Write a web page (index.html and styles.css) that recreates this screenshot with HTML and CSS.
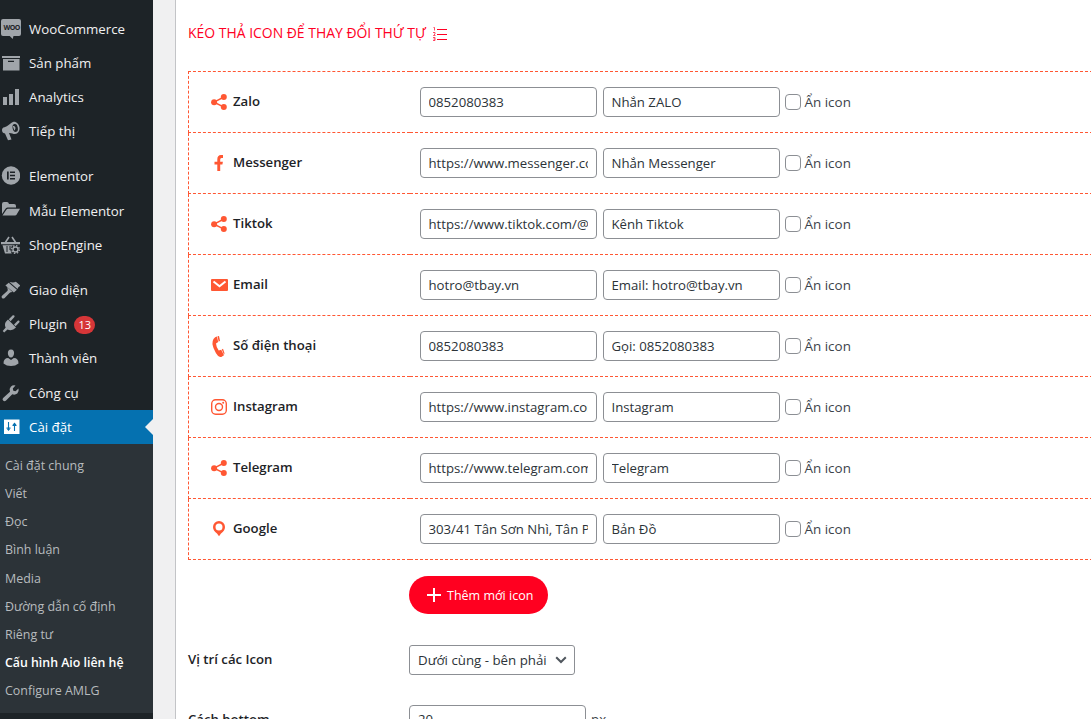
FILE: index.html
```
<!DOCTYPE html>
<html lang="vi">
<head>
<meta charset="utf-8">
<title>Cấu hình Aio liên hệ</title>
<link rel="stylesheet" href="styles.css">
</head>
<body>
<svg class="defs" width="0" height="0" aria-hidden="true">
  <symbol id="share" viewBox="0 0 17 16"><path d="M13 3L3 8.2l10 5" fill="none" stroke="currentColor" stroke-width="1.5"/><circle cx="3.1" cy="8.2" r="3"/><circle cx="12.8" cy="3.1" r="3"/><circle cx="12.8" cy="13" r="3"/></symbol>
</svg>
<div class="admin">
  <aside class="sidebar">
    <nav class="menu">
      <div class="group">
        <a class="item"><svg class="ico woo-icon" viewBox="0 0 21 20"><path d="M3 0h16q2 0 2 2v13q0 2-2 2h-5.500l-.8 3-3-3H3q-2 0-2-2V2q0-2 2-2z"/><text class="woo" x="3.500" y="11">WOO</text></svg>WooCommerce</a>
        <a class="item"><svg class="ico" viewBox="0 0 20 20"><path d="M2 3h18v2H2zM3 6h16.500v11.500H3zm5 1.800v1.200h6V7.800z" fill-rule="evenodd"/></svg>Sản phẩm</a>
        <a class="item"><svg class="ico" viewBox="0 0 20 20"><path d="M3 10h4v8H3zM9 7h4v11H9zM15 2h4v16h-4z"/></svg>Analytics</a>
        <a class="item"><svg class="ico" viewBox="0 0 20 20"><path d="M13 1c3-.8 6 2 6.500 5.500.4 3.500-1.500 6.500-4.500 6.500-1.500.2-3.500-1.200-6-1l2.500 6.500-3.500.8-3-6.800C2.500 12 2 10.500 2 9s.8-2.500 2.500-2.800C8 5.500 10 2 13 1z"/><ellipse cx="15.200" cy="7" rx="2.600" ry="4" fill="#1d2327" transform="rotate(-12 15 7)"/><path d="M12.800 5c2.600-.5 3.600 2.500 1.500 4.500z"/></svg>Tiếp thị</a>
      </div>
      <div class="group">
        <a class="item"><svg class="ico" viewBox="0 0 20 20"><circle cx="11" cy="9.500" r="9.200"/><path d="M7 5.500h1.700v8H7zM10 5.500h5v1.600h-5zM10 8.700h5v1.600h-5zM10 11.900h5v1.600h-5z" fill="#1d2327"/></svg>Elementor</a>
        <a class="item"><svg class="ico" viewBox="0 0 20 20"><path d="M2 13V3q0-2 2-2h3q1.500 0 2 2h5q2 0 2 2v1.500H7.500q-1.500 0-2.500 2zM2.500 14.500l4-6q.5-.8 1.500-.8h12l-3.500 6q-.5.8-1.500.8z"/></svg>Mẫu Elementor</a>
        <a class="item"><svg class="ico" viewBox="0 0 20 20"><path d="M1 7h19v2.200H1zM2.500 10.300h15l-.3 2h-3l-3.500 3 1 3.200H5z"/><path d="M5 8l4-6M12 2l4 6" fill="none" stroke="currentColor" stroke-width="1.600"/><path d="M7 11v6M10 11v4" stroke="#1d2327" stroke-width="1"/><circle cx="15.500" cy="14.500" r="5" fill="#1d2327"/><circle cx="15.500" cy="14.500" r="3.800" fill="none" stroke="currentColor" stroke-width="1.500" stroke-dasharray="1.500 1.485"/><circle cx="15.500" cy="14.500" r="2.500" fill="none" stroke="currentColor" stroke-width="1.400"/></svg>ShopEngine</a>
      </div>
      <div class="group">
        <a class="item"><svg class="ico" viewBox="0 0 20 20"><path d="M9.500 2q4 1 6.300-.2l1 .8 3.700 3.200q-2.500 1-3 3.200zM8.700 2.800l8.200 7-3 2.700-8.500-7zM7 7l5.500 4.900q-2.200 0-3 1l-4.800 5q-1.500 1.200-2.700 0-1-1.300.3-2.500l5-4.500q1-1-.3-3.900z"/></svg>Giao diện</a>
        <a class="item"><svg class="ico" viewBox="0 0 20 20"><path d="M8 5.500l8 8q-4 4-8.500 2L4.200 18.500l-1.500-1.500 3-3.500Q3.500 9.500 8 5.500zM8.800 5.300l4-4q1.200-.5 1.700.5.400.8-.3 1.400l-3.600 4zM14 10.500l4-4q1.300-.4 1.500.8.200.8-.3 1.300l-3.600 3.600z"/></svg>Plugin<span class="badge">13</span></a>
        <a class="item"><svg class="ico" viewBox="0 0 20 20"><path d="M11 1.500c4.800 0 3.400 8 0 8s-4.800-8 0-8zM3.500 15.500q0-5.500 4.700-5.500L11 12l2.800-2q4.700 0 4.700 5.500-3 2.500-7.500 2.500t-7.500-2.500z"/></svg>Thành viên</a>
        <a class="item"><svg class="ico" viewBox="0 0 20 20"><path d="M15.500 2.500l-2.700 3 .5 2.200 2.200.5 3-2.700q.8 3-1.200 5-2.300 1.800-5 .8l-6.500 6.500q-1.500 1-2.700-.2-1.200-1.400 0-2.700L10 8.700q-1.200-2.900.8-5 2-2 4.700-1.200z"/></svg>Công cụ</a>
        <a class="item active"><svg class="ico" viewBox="0 0 20 20"><path d="M4 2.500h15.500v14.500H4z"/><path d="M8.500 5v8M6.500 11h4M14.500 6v8M12.500 8.500h4" stroke="#0571b0" stroke-width="1.100"/><path d="M6.500 11.500h4l-2 2.500zM12.500 8h4l-2-2.500z" fill="#0571b0"/></svg>Cài đặt</a>
      </div>
    </nav>
    <nav class="submenu">
      <a>Cài đặt chung</a><a>Viết</a><a>Đọc</a><a>Bình luận</a><a>Media</a><a>Đường dẫn cố định</a><a>Riêng tư</a><a class="current">Cấu hình Aio liên hệ</a><a>Configure AMLG</a>
    </nav>
  </aside>
  <main class="panel">
    <h2 class="title">KÉO THẢ ICON ĐỂ THAY ĐỔI THỨ TỰ
      <svg class="list-icon" width="14" height="15" viewBox="0 0 14 15"><path d="M4 3.500h10M4 8.500h10M4 13.500h10" stroke="currentColor"/><path d="M.5 1.500h1v3M0 6.500h2v1.500L.5 9.500H2.500M0 11.500h2v3H0M.5 13h1.500" fill="none" stroke="currentColor" stroke-width=".7"/></svg>
    </h2>
    <table class="contacts">
      <tr><th><div class="name"><svg class="net" viewBox="0 0 17 16"><use href="#share"/></svg><span>Zalo</span></div></th><td><div class="fields"><input value="0852080383"><input value="Nhắn ZALO"><label><input type="checkbox">Ẩn icon</label></div></td></tr>
      <tr><th><div class="name"><svg class="net" viewBox="0 0 17 16"><path d="M6.300 16V9.500H3.500V6.800h2.800V4.500Q6.300 0 10 0h2v3h-1.500Q9.200 3 9.200 4.500v2.300h2.700l-.5 2.700H9.200V16z"/></svg><span>Messenger</span></div></th><td><div class="fields"><input value="https://www.messenger.com/t/tbay"><input value="Nhắn Messenger"><label><input type="checkbox">Ẩn icon</label></div></td></tr>
      <tr><th><div class="name"><svg class="net" viewBox="0 0 17 16"><use href="#share"/></svg><span>Tiktok</span></div></th><td><div class="fields"><input value="https://www.tiktok.com/@tbay"><input value="Kênh Tiktok"><label><input type="checkbox">Ẩn icon</label></div></td></tr>
      <tr><th><div class="name"><svg class="net" viewBox="0 0 17 16"><path d="M1 2h15q1 0 1 1v10q0 1-1 1H1q-1 0-1-1V3q0-1 1-1z"/><path d="M2.500 4.500l6 4.800 6-4.800" fill="none" stroke="#fff" stroke-width="2"/></svg><span>Email</span></div></th><td><div class="fields"><input value="hotro@tbay.vn"><input value="Email: hotro@tbay.vn"><label><input type="checkbox">Ẩn icon</label></div></td></tr>
      <tr><th><div class="name"><svg class="net phone" viewBox="0 0 17 21"><path d="M2.500 3Q4 .8 6 .5l1.200 5.500-2.200 1.500q.3 4 2.700 7l2.500-.8 2.800 5.500-3 2q-3-.4-5-4Q2 12 1.500 8.500 1.300 5 2.500 3z"/><path d="M6.500.3L8 0l1 4.700-1.300 1zM10.800 13.500l1.200-.8 1.500 4.500-.5 1.500z"/></svg><span>Số điện thoại</span></div></th><td><div class="fields"><input value="0852080383"><input value="Gọi: 0852080383"><label><input type="checkbox">Ẩn icon</label></div></td></tr>
      <tr><th><div class="name"><svg class="net" viewBox="0 0 17 16"><g fill="none" stroke="currentColor"><rect x=".7" y=".7" width="14.600" height="14.600" rx="4" stroke-width="1.400"/><circle cx="8" cy="8" r="3.500" stroke-width="1.400"/></g><circle cx="12.200" cy="3.800" r="1"/></svg><span>Instagram</span></div></th><td><div class="fields"><input value="https://www.instagram.com/tbay"><input value="Instagram"><label><input type="checkbox">Ẩn icon</label></div></td></tr>
      <tr><th><div class="name"><svg class="net" viewBox="0 0 17 16"><use href="#share"/></svg><span>Telegram</span></div></th><td><div class="fields"><input value="https://www.telegram.com/tbay"><input value="Telegram"><label><input type="checkbox">Ẩn icon</label></div></td></tr>
      <tr><th><div class="name"><svg class="net pin" viewBox="0 0 17 16"><path fill-rule="evenodd" d="M8 0a6 6 0 0 1 6 6q0 3.500-4 6.500l-2 2.700-2-2.700Q2 9.500 2 6a6 6 0 0 1 6-6zm0 2.500a3.500 3.500 0 1 0 0 7 3.500 3.500 0 0 0 0-7z"/></svg><span>Google</span></div></th><td><div class="fields"><input value="303/41 Tân Sơn Nhì, Tân Phú"><input value="Bản Đồ"><label><input type="checkbox">Ẩn icon</label></div></td></tr>
    </table>
    <div class="form">
      <span></span>
      <button class="add"><svg width="14" height="14" viewBox="0 0 14 14"><path d="M7 0v14M0 7h14" stroke="currentColor" stroke-width="2"/></svg><span>Thêm mới icon</span></button>
      <span class="caption">Vị trí các Icon</span>
      <div class="select">Dưới cùng - bên phải<svg width="12" height="8" viewBox="0 0 12 8"><path d="M1.200 1.200L6 6l4.800-4.800" fill="none" stroke="#50575e" stroke-width="2"/></svg></div>
      <span class="caption">Cách bottom</span>
      <div class="fields offset"><input value="20"><span>px</span></div>
    </div>
  </main>
</div>
</body>
</html>
```
FILE: styles.css
```
* { box-sizing: border-box; }
body {
  margin: 0;
  height: 719px;
  overflow: hidden;
  background: #f0f0f1;
  color: #3c434a;
  font: 13.3px/20px "Open Sans", "Noto Sans", sans-serif;
}
.defs { display: block; height: 0; }
.admin { display: flex; height: 719px; overflow: hidden; }

.sidebar { flex: 0 0 153px; background: #1d2327; }
.menu { display: flex; flex-direction: column; gap: 10.9px; height: 444px; padding-top: 11.7px; }
.item {
  position: relative;
  display: flex;
  align-items: center;
  height: 34.210px;
  color: #f0f0f1;
  white-space: nowrap;
}
.ico { width: 20px; height: 20px; margin-right: 9px; fill: #a0a5aa; color: #a0a5aa; }
.woo-icon { width: 21px; margin-right: 8px; }
.woo { font: bold 7px "Open Sans", sans-serif; letter-spacing: -.5px; fill: #1d2327; }
.badge {
  min-width: 21px;
  height: 18px;
  margin: 1px 0 0 7px;
  border-radius: 9px;
  background: #d63638;
  color: #fff;
  font-size: 11px;
  line-height: 18px;
  text-align: center;
}
.active { background: #0571b0; color: #fff; }
.active .ico { fill: #fff; }
.active::after {
  content: "";
  position: absolute;
  right: 0;
  border: 8px solid transparent;
  border-right-color: #f0f0f1;
  border-left: 0;
}
.submenu {
  display: flex;
  flex-direction: column;
  height: 269px;
  padding: 8px 5px 6px;
  background: #2c3338;
  color: #b7bbbe;
  font-size: 12.450px;
  line-height: 28.150px;
  white-space: nowrap;
}
.current { color: #fff; font-size: 12.350px; font-weight: 600; }

.panel {
  flex: 0 0 960px;
  margin-left: 22px;
  padding: 23px 0 0 12px;
  border-left: 1px solid #c3c4c7;
  background: #fff;
}
.title {
  display: flex;
  align-items: center;
  gap: 7px;
  height: 20px;
  margin: 0 0 28px;
  color: #ff0024;
  font-size: 13.950px;
  font-weight: 400;
}
.contacts { width: 980px; border-collapse: collapse; table-layout: fixed; }
.contacts th, .contacts td { height: 61px; padding: 0; border: 1px dashed #ff5733; border-width: 1px 0; }
.contacts th { width: 221px; padding-left: 22px; border-left-width: 1px; text-align: left; }
.contacts td { padding-left: 10px; }
.name {
  display: flex;
  align-items: center;
  gap: 5px;
  color: #1d2327;
  font-size: 13.2px;
  font-weight: 600;
}
.name span { padding-bottom: 2px; }
.net { width: 17px; height: 16px; fill: #ff5733; color: #ff5733; }
.phone { height: 21px; }
.fields { display: flex; align-items: center; }
.fields input:not([type]) {
  width: 177px;
  height: 30px;
  margin: 0 6px 0 0;
  padding: 0 8px;
  border: 1px solid #8c8f94;
  border-radius: 4px;
  background: #fff;
  color: #2c3338;
  font: inherit;
  font-size: 13.2px;
}
.fields label { display: flex; align-items: center; gap: 4px; margin-left: -1px; font-size: 13.450px; }
.fields [type="checkbox"] {
  appearance: none;
  width: 16px;
  height: 16px;
  margin: 0;
  border: 1px solid #8c8f94;
  border-radius: 4px;
}
.form {
  display: grid;
  grid-template-columns: 221px auto;
  grid-template-rows: 39px 30px 30px;
  row-gap: 30px;
  align-items: center;
  justify-items: start;
  padding-top: 16px;
}
.add {
  display: flex;
  align-items: center;
  align-self: start;
  gap: 6px;
  width: 139px;
  height: 38px;
  padding: 0 0 0 18px;
  border: 0;
  border-radius: 19px;
  background: #ff0020;
  color: #fff;
  font: 12.5px/20px "Open Sans", sans-serif;
  white-space: nowrap;
}
.add span { padding-top: 1px; }
.caption { padding-bottom: 2px; color: #1d2327; font-size: 13.2px; font-weight: 600; }
.offset { line-height: 18px; }
.offset span { margin-left: -1px; padding-bottom: 2px; }
.offset input:not([type]) { padding-bottom: 2px; }
.select {
  display: flex;
  align-items: center;
  justify-content: space-between;
  width: 166px;
  height: 30px;
  padding: 0 7px 0 8px;
  border: 1px solid #8c8f94;
  border-radius: 3px;
  color: #2c3338;
  white-space: nowrap;
}
```
